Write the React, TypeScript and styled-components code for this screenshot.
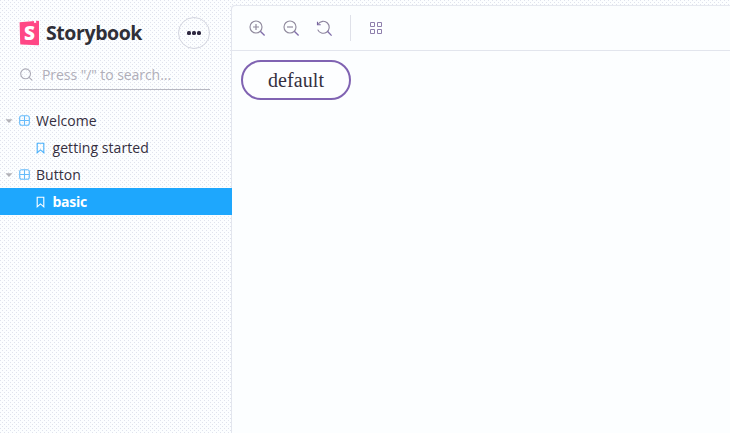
import React from "react";
import styled, { createGlobalStyle, css } from "styled-components";

const GlobalStyle = createGlobalStyle`
  * { box-sizing: border-box; }
  html, body { margin: 0; padding: 0; }
  body { font-family: "Open Sans", "Noto Sans", sans-serif; overflow: hidden; }
  svg { display: block; flex: none; }
`;

const Shell = styled.div`
  display: grid;
  grid-template-columns: 232px 1fr;
  width: 730px;
  height: 433px;
  color: #352f40;
  background-color: #fcfeff;
  background-image:
    radial-gradient(circle at 0.5px 0.5px, #e0e3ed 0.7px, transparent 0.71px),
    radial-gradient(circle at 2.5px 2.5px, #e0e3ed 0.7px, transparent 0.71px);
  background-size: 4px 4px;
`;

const Sidebar = styled.aside`
  display: flex;
  flex-direction: column;
  z-index: 1;
`;

const Brand = styled.header`
  display: flex;
  align-items: center;
  height: 32px;
  margin: 17px 22px 0 19px;
`;

const BrandName = styled.span`
  flex: 1;
  margin-left: 6px;
  font-size: 19.5px;
  line-height: 32px;
  font-weight: 700;
  letter-spacing: -0.42px;
  color: #303038;
`;

const MenuButton = styled.button`
  display: flex;
  align-items: center;
  justify-content: center;
  gap: 1.8px;
  width: 32px;
  height: 32px;
  padding: 0;
  border: 1px solid #d3d5df;
  border-radius: 50%;
  background: transparent;
`;

const Dot = styled.i`
  width: 3.2px;
  height: 3.2px;
  border-radius: 50%;
  background: #2e2840;
`;

const Search = styled.label`
  display: flex;
  align-items: center;
  height: 29px;
  margin: 12px 22px 0 19px;
  padding-bottom: 1px;
  border-bottom: 1px solid #b7b8c1;
`;

const SearchInput = styled.span`
  margin-left: 8px;
  font-size: 14px;
  letter-spacing: -0.06px;
  color: #b0aeb9;
`;

const Tree = styled.nav`
  display: flex;
  flex-direction: column;
  margin-top: 17px;
`;

const Row = styled.div<{ $leaf?: boolean; $selected?: boolean }>`
  display: flex;
  align-items: center;
  height: 27px;
  padding-left: ${(p) => (p.$leaf ? 35 : 5)}px;
  color: #352f40;
  ${(p) =>
    p.$selected &&
    css`
      color: #fff;
      font-weight: 700;
      background: #1ea7fd;
    `}
`;

const Label = styled.span<{ $gap: number; $spacing?: number }>`
  margin-left: ${(p) => p.$gap}px;
  font-size: 14px;
  line-height: 26px;
  letter-spacing: ${(p) => p.$spacing ?? 0.06}px;
`;

const Preview = styled.main`
  display: flex;
  flex-direction: column;
  margin-top: 5px;
  border-top: 1px solid #e6e9f0;
  border-top-left-radius: 4px;
  background: #fcfeff;
  box-shadow: -1px 0 0 #e3e6ee;
`;

const Toolbar = styled.div`
  display: flex;
  align-items: center;
  height: 45px;
  padding-left: 17px;
  border-bottom: 1px solid #e2e5ed;
`;

const Tool = styled.span<{ $after: number }>`
  margin-right: ${(p) => p.$after}px;
`;

const Divider = styled.span`
  width: 1px;
  height: 26px;
  margin-right: 18px;
  background: #dfe1e9;
`;

const Canvas = styled.section`
  padding: 9px;
`;

const StoryButton = styled.button`
  display: block;
  width: 110px;
  height: 40px;
  padding: 0;
  border: 2px solid #8063b2;
  border-radius: 20px;
  background: #fdfeff;
  color: #352f40;
  font-family: "Liberation Serif", serif;
  font-size: 20px;
  line-height: 36px;
  letter-spacing: 0.08px;
`;

const Logo = () => (
  <svg width="21" height="26" viewBox="0 0 21 26">
    <path d="M0.6 2.2 L16 1.1 L19.4 0.8 Q20 0.8 20 1.5 V24.4 Q20 25.3 19.2 25.2 L2.2 24.4 Q1.2 24.3 1.2 23.4 Z" fill="#ff4785" />
    <path d="M14.9 3.2 L15.1 1 L17.1 0.9 L17.2 3.2 L16 2.6 Z" fill="#fff" />
    <text x="10.5" y="19.6" textAnchor="middle" fontFamily="Open Sans" fontWeight="800" fontSize="19" fill="#fff">S</text>
  </svg>
);

const SearchIcon = () => (
  <svg width="15" height="15" viewBox="0 0 15 15" fill="none" stroke="#aaa9b5" strokeWidth="1.1">
    <circle cx="6.6" cy="6.8" r="4.9" />
    <path d="M10.1 10.3 13.2 13.4" />
  </svg>
);

const Caret = () => (
  <svg width="9" height="6" viewBox="0 0 9 6">
    <path d="M0.5 1.2h7L4 5z" fill="#b2b2b8" />
  </svg>
);

const ComponentIcon = () => (
  <svg width="11" height="11" viewBox="0 0 11 11" fill="none" stroke="#64bafa" strokeWidth="1.1">
    <rect x="0.7" y="0.7" width="9.6" height="9.6" rx="2" />
    <path d="M5.5 1v9M1 5.5h9" />
  </svg>
);

const BookmarkIcon = ({ color = "#48b1fb" }: { color?: string }) => (
  <svg width="12" height="12" viewBox="0 0 12 12" fill="none" stroke={color} strokeWidth="1.1">
    <path d="M2.2 1.2h6.6v9.6L5.5 7.9 2.2 10.8z" />
  </svg>
);

const ZoomIcon = ({ plus }: { plus?: boolean }) => (
  <svg width="17" height="17" viewBox="0 0 17 17" fill="none">
    <circle cx="7" cy="7" r="6" stroke="#918b9e" strokeWidth="1.15" />
    <path d="M11.3 11.3 15.6 15.6" stroke="#816eaa" strokeWidth="1.35" />
    <path d={plus ? "M4 7h6M7 4v6" : "M4 7h6"} stroke="#918b9e" strokeWidth="1.2" />
  </svg>
);

const ResetIcon = () => (
  <svg width="17" height="17" viewBox="0 0 17 17" fill="none">
    <path d="M2.2 4A6 6 0 1 1 1.7 9.6" stroke="#8c839d" strokeWidth="1.15" />
    <path d="M1.5 1.7v3h3.2" stroke="#7764a0" strokeWidth="1.15" />
    <path d="M11.4 11.3 15.6 15.6" stroke="#816eaa" strokeWidth="1.35" />
  </svg>
);

const GridIcon = () => (
  <svg width="14" height="14" viewBox="0 0 14 14" fill="none" stroke="#8e7fac">
    <path d="M1.5 1.5h4v4h-4zM8.5 1.5h4v4h-4zM1.5 8.5h4v4h-4zM8.5 8.5h4v4h-4z" />
  </svg>
);

const Gap = styled.span`
  width: 5px;
`;

export default function App() {
  return (
    <>
      <GlobalStyle />
      <Shell>
        <Sidebar>
          <Brand>
            <Logo />
            <BrandName>Storybook</BrandName>
            <MenuButton aria-label="Menu">
              <Dot /><Dot /><Dot />
            </MenuButton>
          </Brand>
          <Search>
            <SearchIcon />
            <SearchInput>Press "/" to search...</SearchInput>
          </Search>
          <Tree>
            <Row><Caret /><Gap /><ComponentIcon /><Label $gap={6}>Welcome</Label></Row>
            <Row $leaf><BookmarkIcon /><Label $gap={5.5}>getting started</Label></Row>
            <Row><Caret /><Gap /><ComponentIcon /><Label $gap={6}>Button</Label></Row>
            <Row $leaf $selected><BookmarkIcon color="#fff" /><Label $gap={5.5} $spacing={-0.25}>basic</Label></Row>
          </Tree>
        </Sidebar>
        <Preview>
          <Toolbar>
            <Tool $after={17}><ZoomIcon plus /></Tool>
            <Tool $after={16}><ZoomIcon /></Tool>
            <Tool $after={17}><ResetIcon /></Tool>
            <Divider />
            <Tool $after={0}><GridIcon /></Tool>
          </Toolbar>
          <Canvas>
            <StoryButton>default</StoryButton>
          </Canvas>
        </Preview>
      </Shell>
    </>
  );
}
